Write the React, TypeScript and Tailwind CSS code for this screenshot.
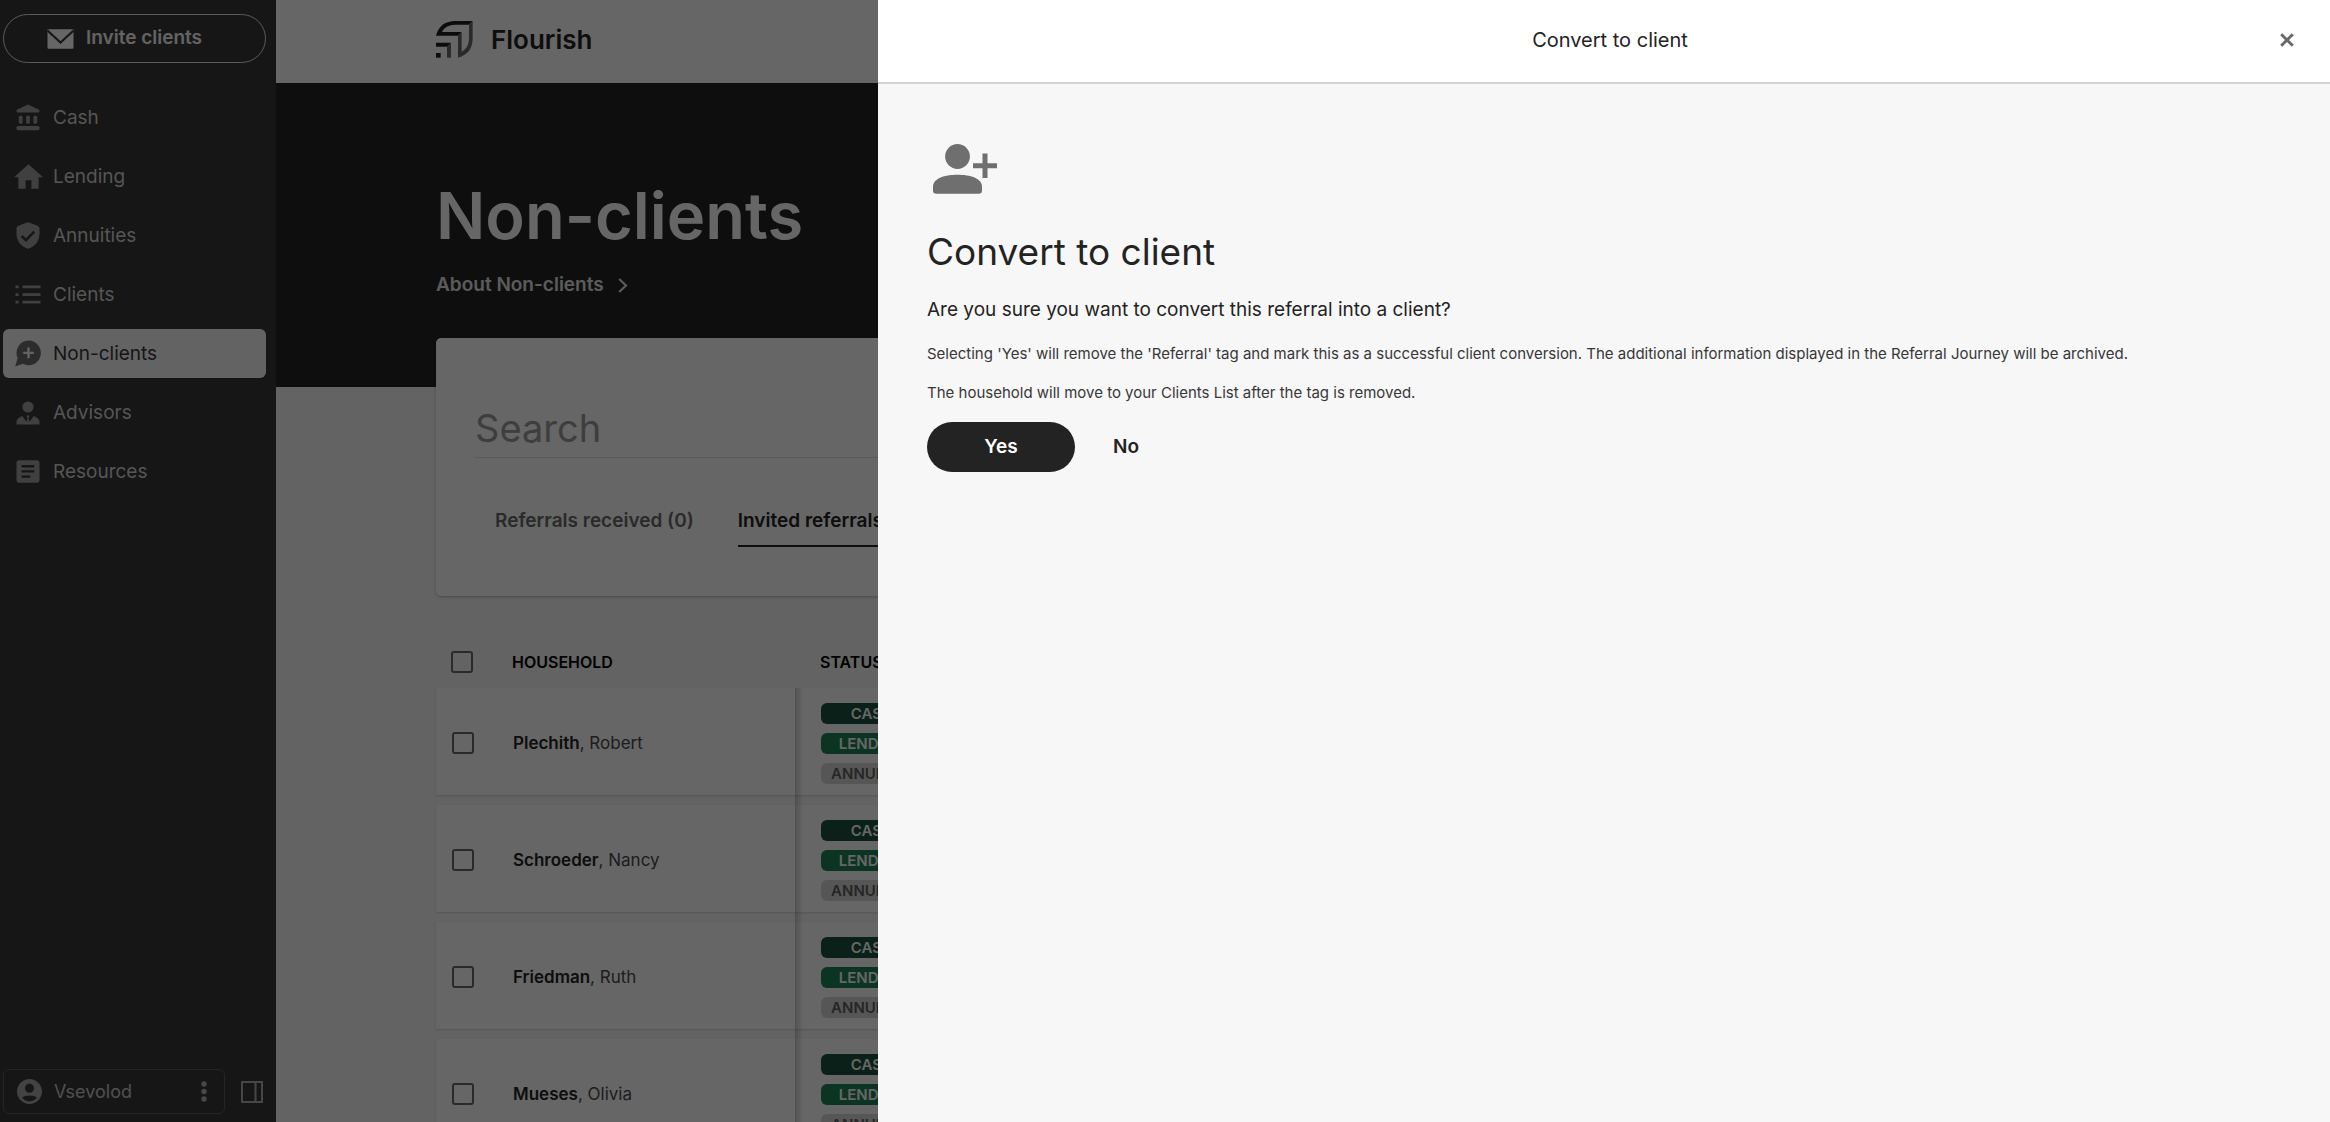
import type { ReactNode } from "react";

const navItems: { label: string; icon: ReactNode; active?: boolean }[] = [
  { label: "Cash", icon: <BankIcon /> },
  { label: "Lending", icon: <HomeIcon /> },
  { label: "Annuities", icon: <ShieldIcon /> },
  { label: "Clients", icon: <ListIcon /> },
  { label: "Non-clients", icon: <ChatPlusIcon />, active: true },
  { label: "Advisors", icon: <AdvisorIcon /> },
  { label: "Resources", icon: <ArticleIcon /> },
];

const households = [
  { last: "Plechith", first: "Robert" },
  { last: "Schroeder", first: "Nancy" },
  { last: "Friedman", first: "Ruth" },
  { last: "Mueses", first: "Olivia" },
];

function BankIcon() {
  return (
    <svg width="24" height="27" viewBox="0 0 24 27" fill="currentColor">
      <path d="M12 0.5 L22.6 5.4 Q23.5 5.9 23.5 6.8 V7.6 Q23.5 8.6 22.5 8.6 H1.5 Q0.5 8.6 0.5 7.6 V6.8 Q0.5 5.9 1.4 5.4 Z" />
      <rect x="2.8" y="11.4" width="3.8" height="8.4" rx="1.9" />
      <rect x="10.1" y="11.4" width="3.8" height="8.4" rx="1.9" />
      <rect x="17.4" y="11.4" width="3.8" height="8.4" rx="1.9" />
      <rect x="0.5" y="22" width="23" height="4.2" rx="1.6" />
    </svg>
  );
}

function HomeIcon() {
  return (
    <svg width="29" height="25" viewBox="2 3 20 17" fill="currentColor">
      <path d="M10 20v-6h4v6h5v-8h3L12 3 2 12h3v8z" />
    </svg>
  );
}

function ShieldIcon() {
  return (
    <svg width="24" height="27" viewBox="0 0 24 27" fill="none">
      <path
        d="M10.9 0.6 Q12 0.2 13.1 0.6 L21.6 3.8 Q23.5 4.6 23.5 6.6 V11.5 C23.5 19 19 24.6 12 26.8 C5 24.6 0.5 19 0.5 11.5 V6.6 Q0.5 4.6 2.4 3.8 Z"
        fill="currentColor"
      />
      <path d="M5.6 14 L10 18.2 L18.2 9.6" stroke="#373737" strokeWidth="2.6" />
    </svg>
  );
}

function ListIcon() {
  return (
    <svg width="26" height="19" viewBox="0 0 26 19" fill="currentColor">
      <path d="M0.5 0.5h3.2v2.8H0.5z M7.5 0.5h18v2.8h-18z M0.5 8.2h3.2v2.8H0.5z M7.5 8.2h18v2.8h-18z M0.5 15.8h3.2v2.8H0.5z M7.5 15.8h18v2.8h-18z" />
    </svg>
  );
}

function ChatPlusIcon() {
  return (
    <svg width="26" height="27" viewBox="0 0 26 27" fill="none">
      <path
        d="M13.5 0.5 A12.2 12.4 0 1 1 7.8 23.8 L0.2 26.4 L2.6 18 A12.2 12.4 0 0 1 13.5 0.5 Z"
        fill="currentColor"
      />
      <path d="M13.5 7.6v10.6M8.2 12.9h10.6" stroke="#f7f7f7" strokeWidth="2.4" />
    </svg>
  );
}

function AdvisorIcon() {
  return (
    <svg width="24" height="24" viewBox="0 0 24 24" fill="currentColor">
      <circle cx="12" cy="6" r="5.6" />
      <path d="M0.5 23.5 V20.6 Q0.5 17.6 6.2 15 L10.6 20.8 L11.4 17 L10.4 14.6 H13.6 L12.6 17 L13.4 20.8 L17.8 15 Q23.5 17.6 23.5 20.6 V23.5 Z" />
    </svg>
  );
}

function ArticleIcon() {
  return (
    <svg width="24" height="23" viewBox="0 0 24 23" fill="none">
      <rect x="0.5" y="0.3" width="23" height="22.4" rx="2.6" fill="currentColor" />
      <path d="M5.5 6.2h12.8M5.5 11.4h12.8M5.5 16.6h8.8" stroke="#373737" strokeWidth="2.4" />
    </svg>
  );
}

function MailIcon() {
  return (
    <svg width="27" height="20" viewBox="0 0 27 20" fill="none">
      <rect x="0.5" y="0.3" width="26" height="19.4" rx="1" fill="#fff" />
      <path d="M0.5 1.6 L13.5 13.6 L26.5 1.6" stroke="#373737" strokeWidth="2" />
    </svg>
  );
}

function FlourishLogo() {
  return (
    <svg width="37" height="37" viewBox="0 0 111 111">
      <g fill="#202020">
        <path d="M110 0 H58 C28 0 8 14 0 44 H66 L77 33 H18 C24 20 38 11 58 11 H99 Z" />
        <path d="M0 65 H45 L34 77 H0 Z" />
        <path d="M0 96 H14 V110 H0 Z" />
      </g>
      <g fill="#6a6a6a">
        <path d="M110 0 V52 C110 82 96 102 66 110 V44 L77 33 V92 C90 86 99 72 99 52 V11 Z" />
        <path d="M45 65 V110 H33 V77 Z" />
      </g>
    </svg>
  );
}

function PersonAddIcon() {
  return (
    <svg width="64" height="50" viewBox="0 0 64 50" fill="#6f6f6f">
      <circle cx="24.5" cy="12.5" r="12.4" />
      <path d="M0 43 C0 34 12 30.8 24.5 30.8 S49 34 49 43 V46.5 Q49 49.8 45.7 49.8 H3.3 Q0 49.8 0 46.5 Z" />
      <path d="M49.5 9.5h5v9.8h9.5v5h-9.5v9.8h-5v-9.8h-9.5v-5h9.5z" />
    </svg>
  );
}

function Sidebar() {
  return (
    <aside className="flex w-[276px] shrink-0 flex-col bg-[#373737] pt-[14px] pr-[10px] pb-2 pl-[3px]">
      <button className="flex h-[49px] w-full items-center justify-center gap-3 rounded-full border border-[#e4e4e4] pr-5 text-[19px] font-semibold text-[#f7f7f7]">
        <MailIcon />
        Invite clients
      </button>
      <nav className="mt-[30px] flex flex-col gap-[10px]">
        {navItems.map((item) => (
          <a
            key={item.label}
            href="#"
            className={
              item.active
                ? "flex h-[49px] items-center gap-[10px] rounded-md bg-[#f7f7f7] pl-[10px] text-[19px] text-[#373737]"
                : "flex h-[49px] items-center gap-[10px] rounded-md pl-[10px] text-[19px] text-[#d4d4d4]"
            }
          >
            <span
              className={
                item.active
                  ? "flex w-[30px] justify-center text-[#6f6f6f]"
                  : "flex w-[30px] justify-center text-[#a0a0a0]"
              }
            >
              {item.icon}
            </span>
            <span className="pt-[2px]">{item.label}</span>
          </a>
        ))}
      </nav>
      <div className="mt-auto flex items-center gap-4">
        <button className="flex h-[45px] flex-1 items-center rounded-md border border-[#5c5c5c] pr-[17px] pl-[13px] text-[18px] text-[#c8c8c8]">
          <svg width="25" height="25" viewBox="0 0 24 24" fill="#a8a8a8">
            <path d="M12 0C5.4 0 0 5.4 0 12s5.4 12 12 12 12-5.4 12-12S18.6 0 12 0zm0 4.6a4.3 4.3 0 1 1 0 8.6 4.3 4.3 0 0 1 0-8.6zm0 16.8c-3 0-5.7-1.5-7.2-3.6C6.3 16.6 9 15.8 12 15.8s5.7.8 7.2 2c-1.5 2.1-4.2 3.6-7.2 3.6z" />
          </svg>
          <span className="ml-3">Vsevolod</span>
          <svg className="ml-auto" width="6" height="21" viewBox="0 0 6 21" fill="#b4b4b4">
            <circle cx="3" cy="3" r="2.7" />
            <circle cx="3" cy="10.5" r="2.7" />
            <circle cx="3" cy="18" r="2.7" />
          </svg>
        </button>
        <button aria-label="Collapse sidebar" className="mr-[3px]">
          <svg width="22" height="22" viewBox="0 0 22 22" fill="none" stroke="#b0b0b0" strokeWidth="2">
            <path d="M1 1h20v20H1z M14.5 1v20" />
          </svg>
        </button>
      </div>
    </aside>
  );
}

function Checkbox({ label }: { label: string }) {
  return (
    <input
      type="checkbox"
      aria-label={label}
      className="block size-[22px] appearance-none rounded-[3px] border-2 border-[#6a6a6a]"
    />
  );
}

function StatusBadges() {
  return (
    <div className="flex w-[102px] flex-col gap-[9px] text-center text-[15px] leading-[21px] font-semibold">
      <span className="rounded-md bg-[#1b503c] text-white">CASH</span>
      <span className="rounded-md bg-[#1c8259] text-white">LENDING</span>
      <span className="rounded-md bg-[#d8d8d8] text-[#606060]">ANNUITIES</span>
    </div>
  );
}

function HouseholdTable() {
  return (
    <div className="relative mt-10">
      <table className="w-full border-collapse text-left">
        <thead>
          <tr className="h-[52px]">
            <th className="w-[76px] pl-[15px]">
              <Checkbox label="Select all households" />
            </th>
            <th className="w-[283px] text-[16px] font-semibold">HOUSEHOLD</th>
            <th className="pl-[25px] text-[16px] font-semibold">STATUS</th>
          </tr>
        </thead>
        {households.map((h) => (
          <tbody key={h.last}>
            <tr className="h-[107px] bg-white shadow-[0_1px_2px_rgba(0,0,0,0.15)]">
              <td className="pt-[3px] pl-4">
                <Checkbox label={`Select ${h.last}, ${h.first}`} />
              </td>
              <td className="pt-[4px] pl-px text-[17px] text-[#4a4a4a]">
                <span className="font-semibold text-[#232323]">{h.last}</span>, {h.first}
              </td>
              <td className="pt-[3px] pl-[26px]">
                <StatusBadges />
              </td>
            </tr>
            <tr className="h-[10px]" />
          </tbody>
        ))}
      </table>
      <div className="absolute top-[52px] bottom-0 left-[359px] w-2 bg-linear-to-r from-black/20 to-transparent" />
    </div>
  );
}

function MainPage() {
  return (
    <main className="min-w-0 flex-1 overflow-hidden bg-[#f7f7f7]">
      <header className="flex h-[83px] items-center gap-[18px] bg-white px-40 pb-[5px]">
        <FlourishLogo />
        <span className="text-[26px] font-semibold text-[#232323]">Flourish</span>
      </header>
      <section className="h-[304px] bg-[#232323] px-40 pt-[97px]">
        <h1 className="text-[65px] leading-[72px] font-semibold text-white">Non-clients</h1>
        <a href="#" className="mt-[19px] flex items-center gap-[14px] text-[19px] leading-7 font-semibold text-[#e4e4e4]">
          About Non-clients
          <svg width="10" height="15" viewBox="0 0 10 15" fill="none" stroke="currentColor" strokeWidth="2.2">
            <path d="M1.2 1 L8 7.5 L1.2 14" />
          </svg>
        </a>
      </section>
      <div className="px-40">
        <section className="-mt-[49px] rounded-[5px] bg-white px-[39px] pt-[66px] pb-[49px] shadow-[0_1px_3px_rgba(0,0,0,0.25)]">
          <input
            type="text"
            aria-label="Search"
            placeholder="Search"
            className="block w-full border-b border-[#e0e0e0] pb-[5px] text-[38px] leading-[48px] placeholder:text-[#9c9c9c]"
          />
          <div className="mt-[49px] flex gap-[44px] pl-5 text-[19px] leading-7 font-semibold">
            <button className="border-b-2 border-transparent pb-[10px] text-[#6a6a6a]">
              Referrals received (0)
            </button>
            <button className="border-b-2 border-[#232323] pb-[10px] text-[#232323]">Invited referrals</button>
          </div>
        </section>
        <HouseholdTable />
      </div>
    </main>
  );
}

function ConvertDrawer() {
  return (
    <div
      role="dialog"
      aria-label="Convert to client"
      className="fixed inset-y-0 right-0 left-[878px] flex flex-col bg-[#f7f7f7] text-[#232323]"
    >
      <header className="flex h-[84px] items-center border-b-2 border-[#d2d2d2] bg-white pr-[31px] pb-[3px] pl-[67px]">
        <p className="flex-1 text-center text-[20px]">Convert to client</p>
        <button aria-label="Close" className="flex size-6 items-center justify-center">
          <svg width="14" height="14" viewBox="0 0 14 14" stroke="#6a6a6a" strokeWidth="3">
            <path d="M1.2 1.2 L12.8 12.8 M12.8 1.2 L1.2 12.8" />
          </svg>
        </button>
      </header>
      <div className="px-[49px] pt-[60px]">
        <div className="pl-[6px]">
          <PersonAddIcon />
        </div>
        <h2 className="mt-9 text-[37px] leading-[44px]">Convert to client</h2>
        <p className="mt-[22px] text-[19px] leading-7">
          Are you sure you want to convert this referral into a client?
        </p>
        <p className="mt-[18px] text-[15px] leading-6 text-[#373737]">
          Selecting 'Yes' will remove the 'Referral' tag and mark this as a successful client conversion. The
          additional information displayed in the Referral Journey will be archived.
        </p>
        <p className="mt-[15px] text-[15px] leading-6 text-[#373737]">
          The household will move to your Clients List after the tag is removed.
        </p>
        <div className="mt-[17px] flex gap-[38px] text-[19px] font-semibold">
          <button className="h-[50px] w-[148px] rounded-full bg-[#232323] text-white">Yes</button>
          <button>No</button>
        </div>
      </div>
    </div>
  );
}

export default function App() {
  return (
    <div className="flex h-screen overflow-hidden font-[Inter,sans-serif]">
      <Sidebar />
      <MainPage />
      <div className="fixed inset-0 bg-black/60" />
      <ConvertDrawer />
    </div>
  );
}
